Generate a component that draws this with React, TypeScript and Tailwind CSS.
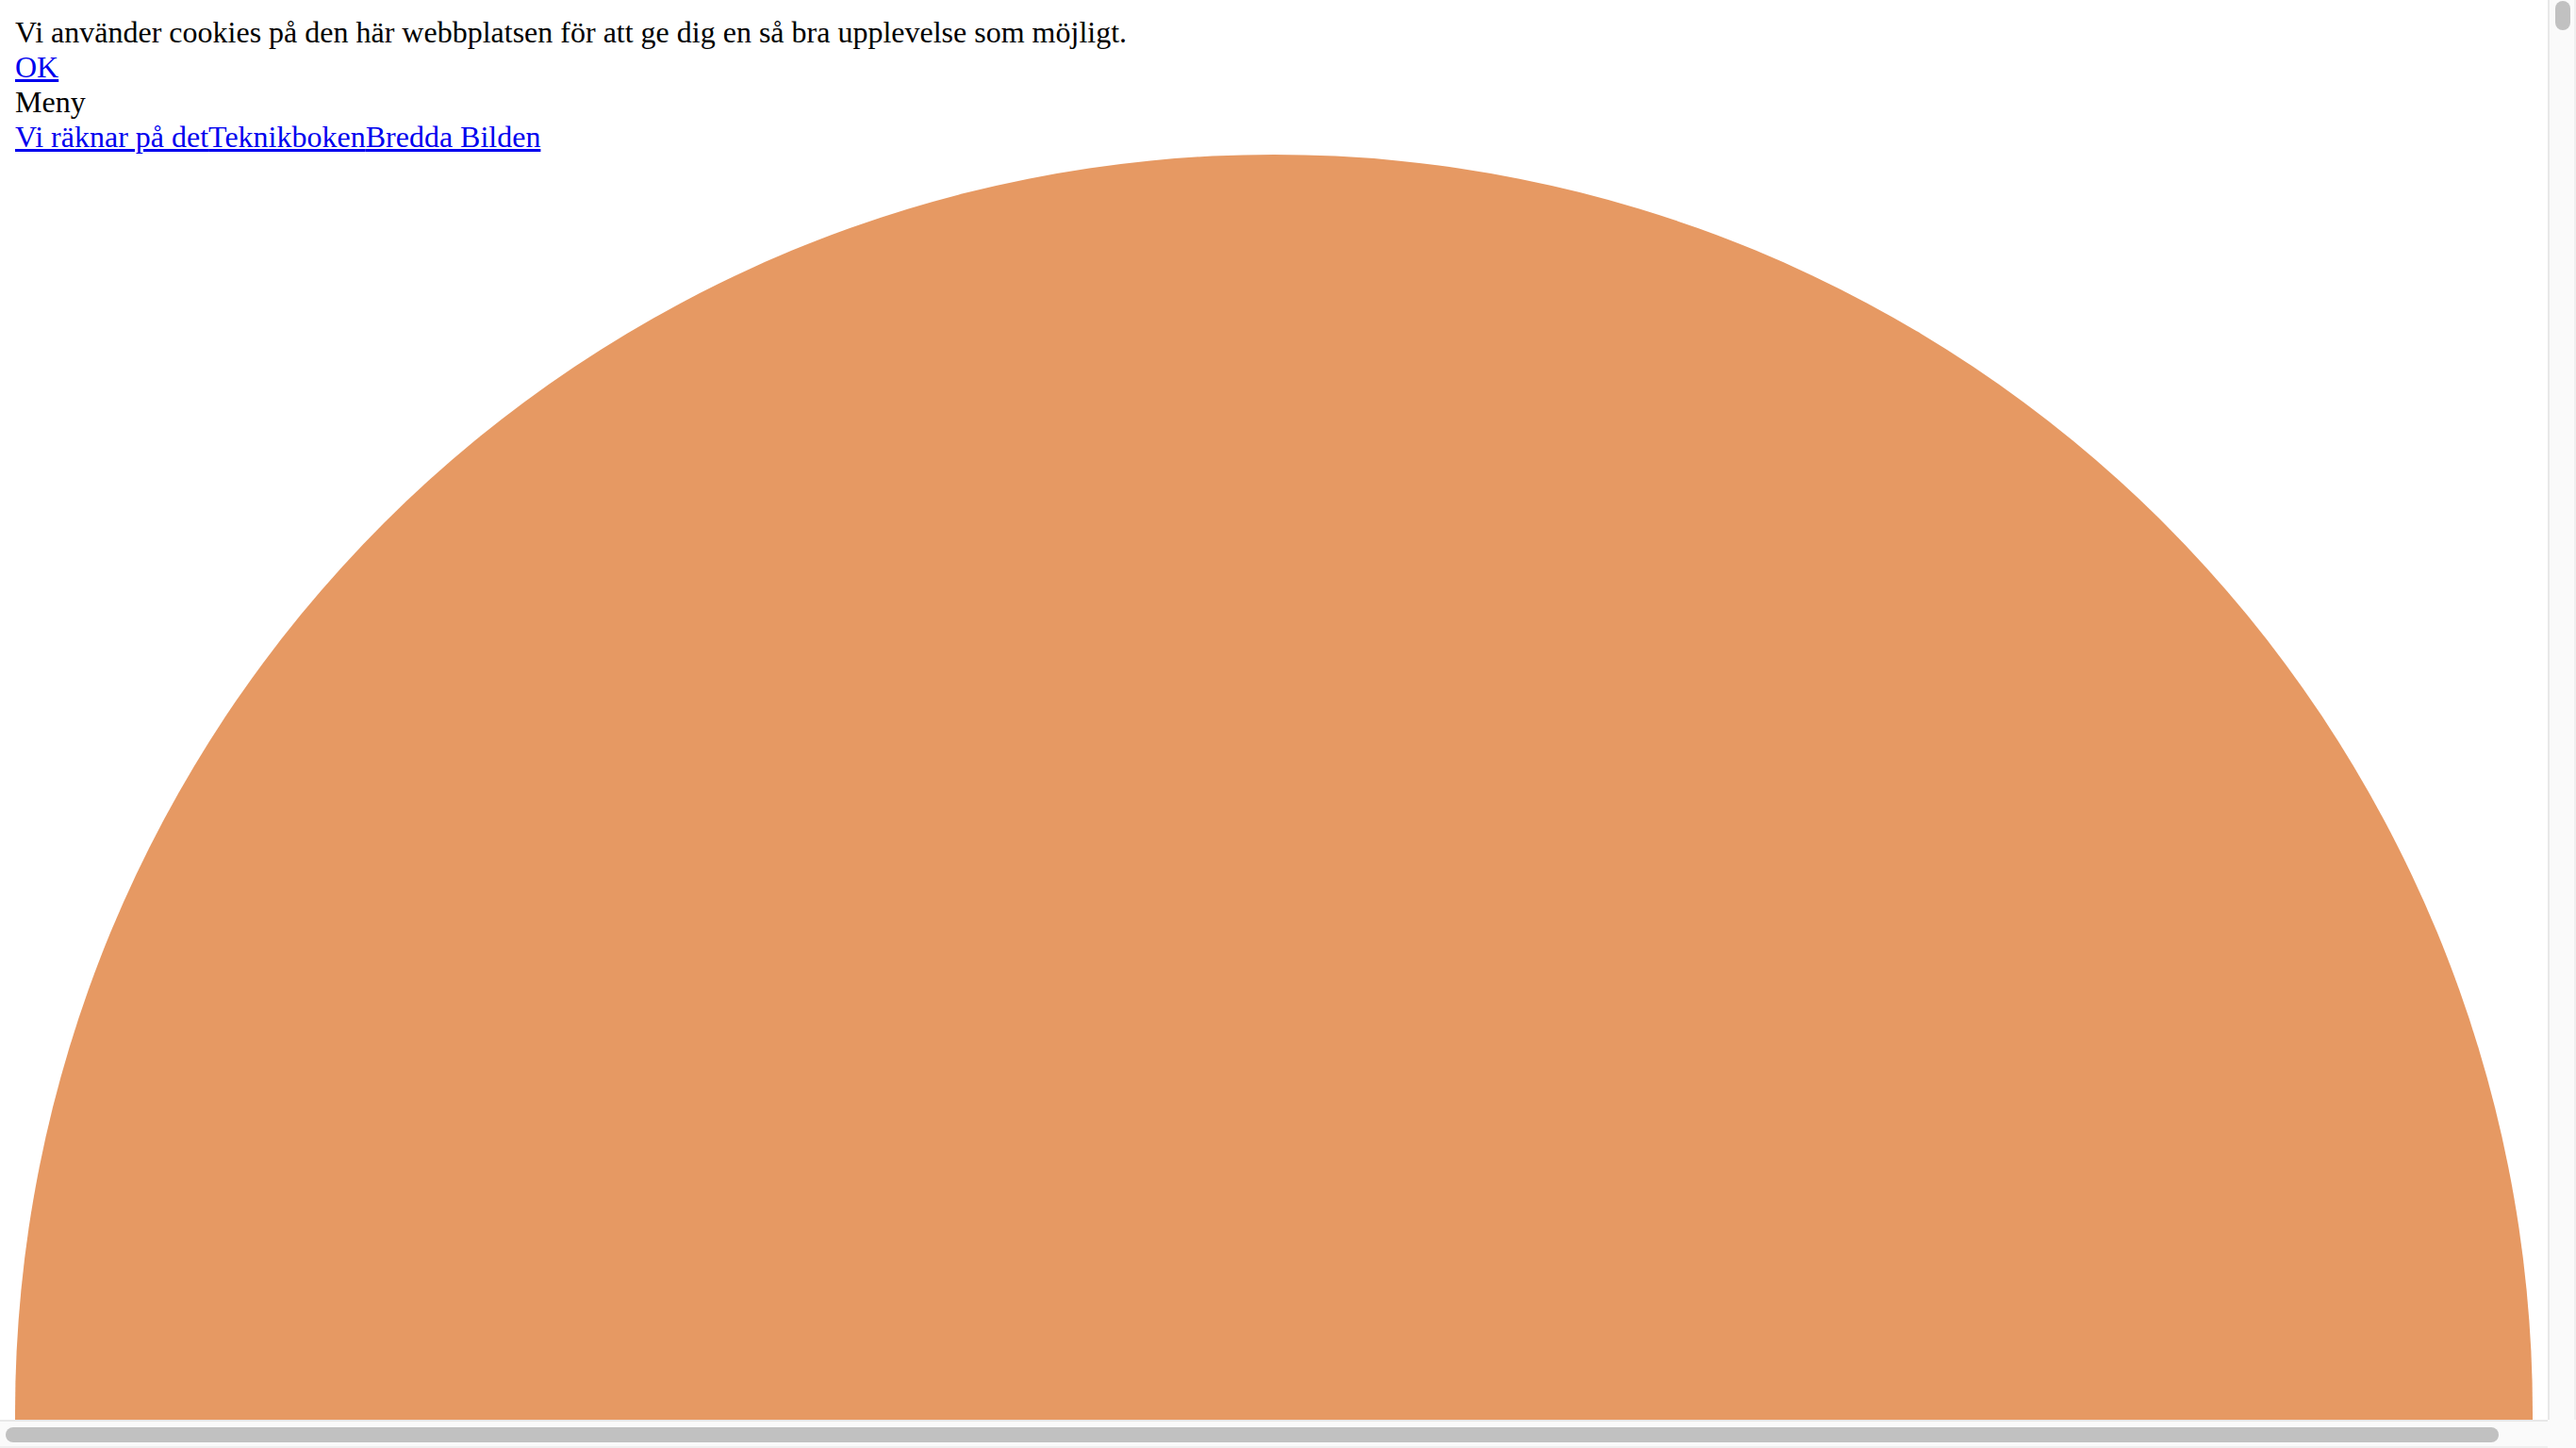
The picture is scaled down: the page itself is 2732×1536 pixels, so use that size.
export default function App() {
  return (
    <div className="grid h-[1536px] w-[2732px] grid-cols-[2702px_30px] grid-rows-[1506px_30px] overflow-hidden bg-white">
      {/* page viewport */}
      <div className="overflow-hidden bg-white">
        <div className="p-[16px] font-['Liberation_Serif','Times_New_Roman',serif] text-[32px] leading-[normal] text-black">
          <div>Vi använder cookies på den här webbplatsen för att ge dig en så bra upplevelse som möjligt.</div>
          <div>
            <a href="#" className="text-[#0000ee] underline">
              OK
            </a>
          </div>
          <div>Meny</div>
          <div>
            <a href="#" className="text-[#0000ee] underline">
              Vi räknar på det
            </a>
            <a href="#" className="text-[#0000ee] underline">
              Teknikboken
            </a>
            <a href="#" className="text-[#0000ee] underline">
              Bredda Bilden
            </a>
          </div>
          <div className="aspect-square w-full rounded-full bg-[#e69963]" />
        </div>
      </div>

      {/* vertical scrollbar */}
      <div className="flex border-l-2 border-r-2 border-l-[#e8e8e8] border-r-[#efefef] bg-[#fafafa] pl-[6px]">
        <div className="mt-[1px] h-[31px] w-[16px] rounded-full bg-[#c1c1c1]" />
      </div>

      {/* horizontal scrollbar */}
      <div className="border-t-2 border-b-2 border-t-[#e8e8e8] border-b-[#efefef] bg-[#fafafa] pt-[6px] pl-[6px]">
        <div className="h-[16px] w-[2644px] rounded-full bg-[#c1c1c1]" />
      </div>

      {/* corner */}
      <div className="bg-[#fafafa]" />
    </div>
  );
}
